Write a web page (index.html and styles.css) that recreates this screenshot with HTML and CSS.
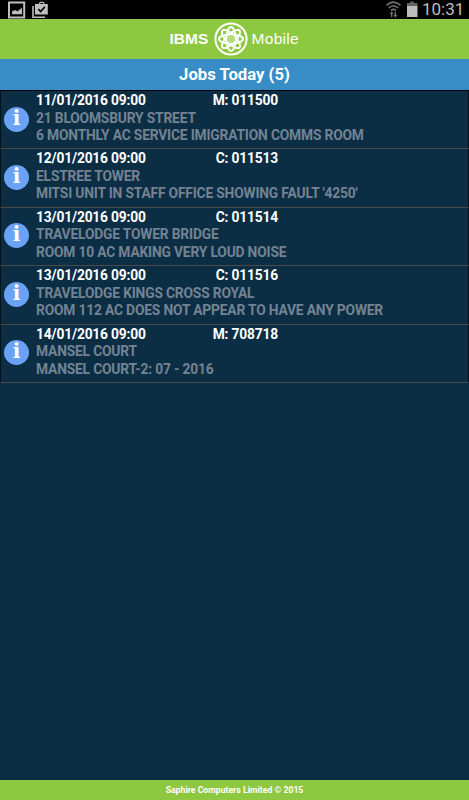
FILE: index.html
```html
<!DOCTYPE html>
<html lang="en">
<head>
    <meta charset="UTF-8">
    <meta name="viewport" content="width=device-width, initial-scale=1.0">
    <title>IBMS Mobile - Jobs Today</title>
    <link rel="stylesheet" href="styles.css">
</head>
<body>
    <div class="status-bar">
        <svg class="notifications" width="50" height="20" viewBox="0 0 50 20">
            <rect x="9" y="2.5" width="15.2" height="15" fill="none" stroke="#bdbdbd" stroke-width="2"/>
            <path d="M12 14.300V11.500L15 10l2.500 1.200L22 7.700v6.600z" fill="#bdbdbd"/>
            <path d="M33 6v11.200h12" fill="none" stroke="#bdbdbd" stroke-width="1.600"/>
            <path d="M35 4h4V3l1.200-1.200h3L44.500 3v1h3.300v10.600H35zM40.300 4h2.900v-.9h-2.900z" fill="#bdbdbd" fill-rule="evenodd"/>
            <path d="M38.300 9l2.300 2.500 4.200-4.600" fill="none" stroke="#000" stroke-width="1.600"/>
        </svg>
        <div class="system">
            <svg width="34" height="20" viewBox="0 0 34 20">
                <g fill="none" stroke="#757575" stroke-width="1.600">
                    <path d="M.5 5.300q7-6.500 14 0M2.700 8q4.800-4.500 9.600 0M5 10.600q2.500-2.400 5 0"/>
                    <path d="M5.700 17v-4.500M9.300 12v4.500" stroke-width="1.400"/>
                </g>
                <path d="M3.400 14.200l2.300-2.700 1.700 2zM7.400 15l1.900 2.500 2.200-2.500z" fill="#757575"/>
                <path d="M21 3h3V1.500h4V3h3.500v3.500H21z" fill="#626262"/>
                <path d="M21 6h10.500v11H21z" fill="#bdbdbd"/>
            </svg>
            <span class="clock">10:31</span>
        </div>
    </div>

    <div class="header">
        <span class="brand">IBMS</span>
        <svg class="logo" width="34" height="34" viewBox="-17 -17 34 34">
            <circle r="15.600" stroke-width="2"/>
            <g stroke-width="1.900">
                <ellipse rx="12" ry="4.600"/>
                <ellipse rx="12" ry="4.600" transform="rotate(45)"/>
                <ellipse rx="12" ry="4.600" transform="rotate(90)"/>
                <ellipse rx="12" ry="4.600" transform="rotate(135)"/>
            </g>
            <circle class="core" r="5" stroke-width="1.800"/>
        </svg>
        <span class="product">Mobile</span>
    </div>

    <div class="title">Jobs Today (5)</div>

    <div class="jobs">
        <div class="job">
            <div class="info">i</div>
            <div class="details">
                <div class="when"><span>11/01/2016 09:00</span><span class="ref">M: 011500</span></div>
                <div>21 BLOOMSBURY STREET</div>
                <div>6 MONTHLY AC SERVICE IMIGRATION COMMS ROOM</div>
            </div>
        </div>
        <div class="job">
            <div class="info">i</div>
            <div class="details">
                <div class="when"><span>12/01/2016 09:00</span><span class="ref">C: 011513</span></div>
                <div>ELSTREE TOWER</div>
                <div>MITSI UNIT IN STAFF OFFICE SHOWING FAULT '4250'</div>
            </div>
        </div>
        <div class="job">
            <div class="info">i</div>
            <div class="details">
                <div class="when"><span>13/01/2016 09:00</span><span class="ref">C: 011514</span></div>
                <div>TRAVELODGE TOWER BRIDGE</div>
                <div>ROOM 10 AC MAKING VERY LOUD NOISE</div>
            </div>
        </div>
        <div class="job">
            <div class="info">i</div>
            <div class="details">
                <div class="when"><span>13/01/2016 09:00</span><span class="ref">C: 011516</span></div>
                <div>TRAVELODGE KINGS CROSS ROYAL</div>
                <div>ROOM 112 AC DOES NOT APPEAR TO HAVE ANY POWER</div>
            </div>
        </div>
        <div class="job">
            <div class="info">i</div>
            <div class="details">
                <div class="when"><span>14/01/2016 09:00</span><span class="ref">M: 708718</span></div>
                <div>MANSEL COURT</div>
                <div>MANSEL COURT-2: 07 - 2016</div>
            </div>
        </div>
    </div>

    <div class="footer">Saphire Computers Limited © 2015</div>
</body>
</html>
```

FILE: styles.css
```css
* {
    box-sizing: border-box;
}
body {
    font-family: Roboto, 'Liberation Sans', sans-serif;
    font-weight: bold;
    color: white;
    background: #0c2e45;
    margin: 0;
    height: 100vh;
    display: flex;
    flex-direction: column;
    overflow: hidden;
}
.status-bar {
    height: 19px;
    background: #000;
    display: flex;
    justify-content: space-between;
    flex-shrink: 0;
}
.system {
    display: flex;
    padding-right: 6px;
}
.clock {
    margin-left: 2px;
    width: 41px;
    font-size: 17px;
    font-weight: 400;
    line-height: 19px;
    color: #bdbdbd;
    white-space: nowrap;
}
.header {
    height: 40px;
    background: #8ec740;
    display: flex;
    align-items: center;
    justify-content: center;
    flex-shrink: 0;
    font-family: 'Liberation Sans', Arial, sans-serif;
    font-size: 15.5px;
}
.brand {
    width: 40px;
}
.logo {
    margin: 0 4px;
    fill: none;
    stroke: white;
}
.logo .core {
    fill: #b5da83;
}
.product {
    width: 48px;
    font-weight: normal;
    letter-spacing: 0.3px;
}
.title {
    height: 31px;
    line-height: 31px;
    background: #398dc6;
    font-size: 16.7px;
    text-align: center;
    flex-shrink: 0;
}
.jobs {
    flex: 1;
    border-top: 1px solid #000;
}
.job {
    height: 58.5px;
    display: flex;
    border: 1px solid #06121b;
    border-top: none;
    border-bottom: 1px solid #4d4b4a;
}
.job:first-child {
    height: 58px;
}
.info {
    width: 25px;
    height: 25px;
    margin: 15.5px 7px 0 3px;
    border-radius: 50%;
    background: #6aa2f5;
    font-family: 'DejaVu Serif', serif;
    font-size: 20px;
    line-height: 23px;
    text-align: center;
}
.details {
    padding-top: 1.2px;
    font-size: 13.8px;
    letter-spacing: -0.17px;
    line-height: 17.5px;
    color: #738393;
    white-space: nowrap;
}
.when {
    display: flex;
    justify-content: space-between;
    width: 242px;
    color: white;
}
.footer {
    height: 20px;
    line-height: 20px;
    background: #8ec740;
    font-size: 8.7px;
    text-align: center;
    flex-shrink: 0;
}
```
